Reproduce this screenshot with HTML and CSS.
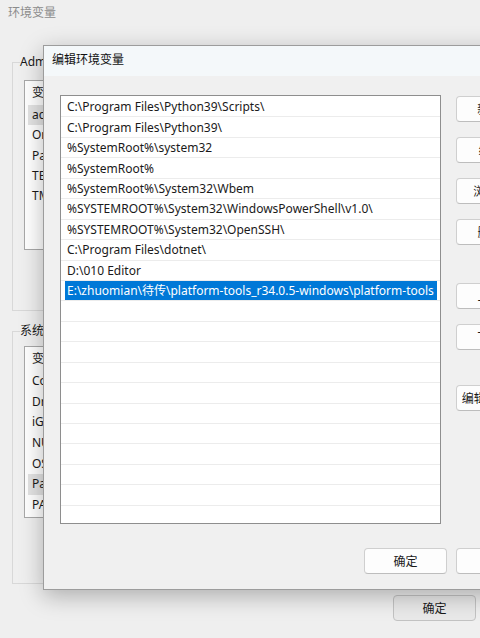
FILE: index.html
```html
<!DOCTYPE html>
<html lang="zh-CN">
<head>
<meta charset="utf-8">
<title>编辑环境变量</title>
<link rel="stylesheet" href="styles.css">
</head>
<body>
<div class="envwin">
  <div class="win-title">环境变量</div>
  <div class="env-body">
    <fieldset class="group group-user">
      <legend>Administrator 的用户变量(U)</legend>
      <div class="vlist vlist-user">
        <div class="vhead">变量</div>
        <div class="vrow sel">ac_home</div>
        <div class="vrow">OneDrive</div>
        <div class="vrow">Path</div>
        <div class="vrow">TEMP</div>
        <div class="vrow">TMP</div>
      </div>
    </fieldset>
    <fieldset class="group group-sys">
      <legend>系统变量(S)</legend>
      <div class="vlist vlist-sys">
        <div class="vhead">变量</div>
        <div class="vrow">ComSpec</div>
        <div class="vrow">DriverData</div>
        <div class="vrow">iGfxPath</div>
        <div class="vrow">NUMBER_OF_PROCESSORS</div>
        <div class="vrow">OS</div>
        <div class="vrow sel">Path</div>
        <div class="vrow">PATHEXT</div>
      </div>
    </fieldset>
    <div class="env-footer">
      <button class="btn btn-dim">确定</button>
      <button class="btn btn-dim">取消</button>
    </div>
  </div>
</div>

<div class="dialog">
  <div class="dlg-title">编辑环境变量</div>
  <div class="dlg-body">
    <div class="dlg-main">
      <div class="plist">
        <div class="prow"><span class="ptext">C:\Program Files\Python39\Scripts\</span></div>
        <div class="prow"><span class="ptext">C:\Program Files\Python39\</span></div>
        <div class="prow"><span class="ptext">%SystemRoot%\system32</span></div>
        <div class="prow"><span class="ptext">%SystemRoot%</span></div>
        <div class="prow"><span class="ptext">%SystemRoot%\System32\Wbem</span></div>
        <div class="prow"><span class="ptext">%SYSTEMROOT%\System32\WindowsPowerShell\v1.0\</span></div>
        <div class="prow"><span class="ptext">%SYSTEMROOT%\System32\OpenSSH\</span></div>
        <div class="prow"><span class="ptext">C:\Program Files\dotnet\</span></div>
        <div class="prow"><span class="ptext">D:\010 Editor</span></div>
        <div class="prow"><span class="ptext selected">E:\zhuomian\待传\platform-tools_r34.0.5-windows\platform-tools</span></div>
        <div class="prow"></div>
        <div class="prow"></div>
        <div class="prow"></div>
        <div class="prow"></div>
        <div class="prow"></div>
        <div class="prow"></div>
        <div class="prow"></div>
        <div class="prow"></div>
        <div class="prow"></div>
        <div class="prow"></div>
        <div class="prow"></div>
      </div>
      <div class="side-btns">
        <button class="btn">新建(N)</button>
        <button class="btn">编辑(E)</button>
        <button class="btn">浏览(B)...</button>
        <button class="btn">删除(D)</button>
        <button class="btn gap-lg">上移(U)</button>
        <button class="btn">下移(O)</button>
        <button class="btn gap-xl">编辑文本(T)...</button>
      </div>
    </div>
    <div class="dlg-footer">
      <button class="btn">确定</button>
      <button class="btn">取消</button>
    </div>
  </div>
</div>
</body>
</html>
```

FILE: styles.css
```css
html, body {
  margin: 0;
  padding: 0;
}

body {
  width: 480px;
  height: 638px;
  overflow: hidden;
  position: relative;
  background: #ececec;
  font-family: "Noto Sans", "Noto Sans CJK SC", sans-serif;
  font-size: 12px;
  color: #1a1a1a;
}

/* ---- parent window: 环境变量 ---- */
.envwin {
  width: 640px;
  height: 638px;
  background: #efefef;
}

.win-title {
  height: 30px;
  padding-left: 8px;
  line-height: 26px;
  color: #8c8c8c;
  font-size: 12px;
}

.env-body {
  padding: 24px 0 0 12px;
}

.group {
  margin: 0;
  border: 1px solid #d8d8d8;
  padding: 0 11px;
  min-width: 0;
}

.group legend {
  padding: 0;
  margin-left: -4px;
  line-height: 16px;
  color: #1a1a1a;
}

.group-user {
  height: 245px;
  padding-top: 10px;
}

.group-sys {
  margin-top: 12px;
  height: 252px;
  padding-top: 7px;
}

.vlist {
  background: #fff;
  border: 1px solid #a8a8a8;
  width: 560px;
}

.vlist-user {
  height: 168px;
}

.vlist-sys {
  height: 170px;
}

.vhead {
  height: 24px;
  line-height: 24px;
  padding-left: 7px;
}

.vrow {
  height: 20.3px;
  line-height: 20.3px;
  margin-left: 3px;
  padding-left: 4px;
}

.vlist-sys .vrow {
  height: 20.7px;
  line-height: 20.7px;
}

.vrow.sel {
  background: #e3e3e3;
}

.env-footer {
  display: flex;
  gap: 9px;
  margin-top: 11px;
  padding-left: 381px;
}

/* ---- buttons ---- */
.btn {
  box-sizing: border-box;
  flex-shrink: 0;
  width: 83px;
  height: 26px;
  padding: 0;
  border: 1px solid #cfcfcf;
  border-bottom-color: #bdbdbd;
  border-radius: 4px;
  background: #fdfdfd;
  font-family: inherit;
  font-size: 12px;
  color: #1a1a1a;
  white-space: nowrap;
  display: flex;
  align-items: center;
  justify-content: center;
  overflow: visible;
}

.btn-dim {
  background: #e9e9e9;
  border-color: #c3c3c3;
}

/* ---- child dialog: 编辑环境变量 ---- */
.dialog {
  position: absolute;
  left: 43px;
  top: 45px;
  width: 530px;
  height: 545px;
  box-sizing: border-box;
  border: 1px solid #9c9c9c;
  background: #f0f0f0;
  box-shadow: 0 6px 22px rgba(0, 0, 0, 0.28);
}

.dlg-title {
  height: 30px;
  line-height: 28px;
  padding-left: 8px;
  background: #f4f8fa;
  font-size: 12px;
  color: #111;
}

.dlg-body {
  padding: 19px 0 0 16px;
}

.dlg-main {
  display: flex;
  align-items: flex-start;
  gap: 15px;
}

.plist {
  box-sizing: border-box;
  flex-shrink: 0;
  width: 381px;
  height: 429px;
  border: 1px solid #8e8e8e;
  background: #fff;
  padding-top: 1px;
  overflow: hidden;
}

.prow {
  box-sizing: border-box;
  height: 20.44px;
  border-bottom: 1px solid #ececec;
  padding-left: 4px;
  display: flex;
  align-items: center;
  white-space: nowrap;
}

.ptext {
  display: inline-block;
  line-height: 19px;
  padding: 0 3px 0 2px;
}

.ptext.selected {
  background: #0078d7;
  color: #fff;
}

.side-btns {
  display: flex;
  flex-direction: column;
  flex-shrink: 0;
  gap: 15px;
  padding-top: 1px;
}

.side-btns .gap-lg {
  margin-top: 23px;
}

.side-btns .gap-xl {
  margin-top: 20px;
}

.dlg-footer {
  display: flex;
  gap: 9px;
  margin-top: 24px;
  padding-left: 304px;
}
```
